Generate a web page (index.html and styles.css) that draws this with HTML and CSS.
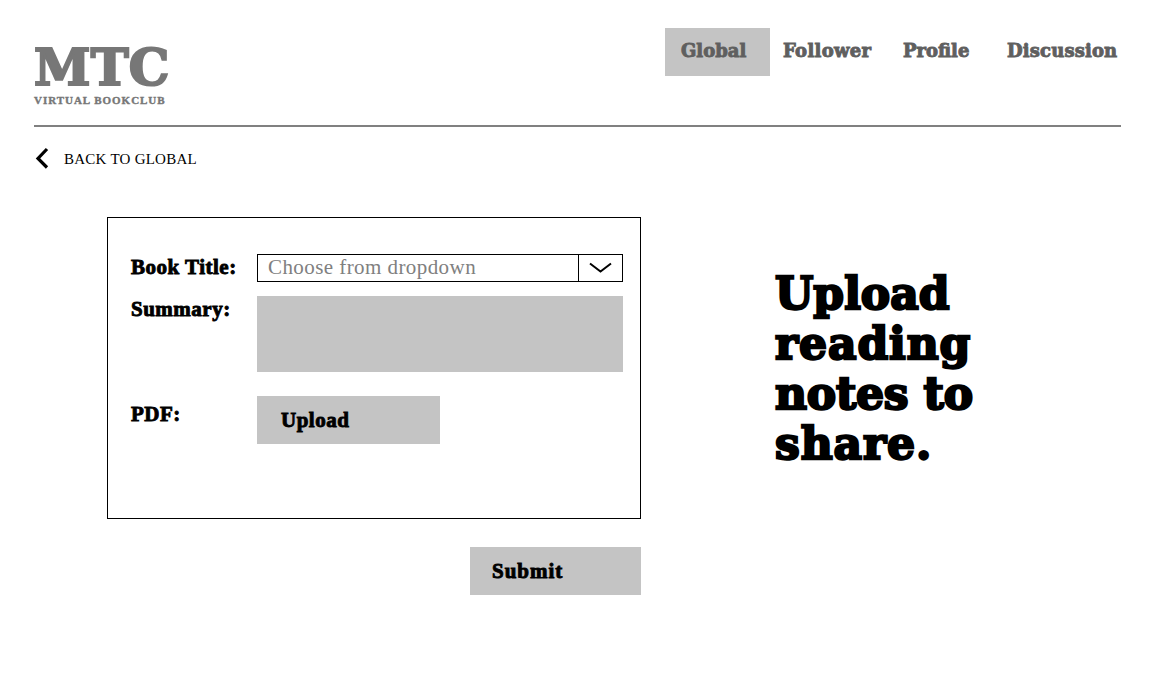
FILE: index.html
```html
<!DOCTYPE html>
<html lang="en">
<head>
<meta charset="utf-8">
<title>MTC Virtual Bookclub</title>
<link rel="stylesheet" href="styles.css">
</head>
<body>
<header class="header">
  <div class="brand">
    <div class="brand-name">MTC</div>
    <div class="brand-tag">VIRTUAL BOOKCLUB</div>
  </div>
  <nav class="nav">
    <a class="nav-item nav-global">Global</a>
    <a class="nav-item nav-follower">Follower</a>
    <a class="nav-item nav-profile">Profile</a>
    <a class="nav-item nav-discussion">Discussion</a>
  </nav>
</header>
<a class="back">
  <svg class="back-icon" width="14" height="22" viewBox="0 0 14 22"><path d="M12 2 3 11.500l9 9" fill="none" stroke="#000" stroke-width="3.200"/></svg>
  <span>BACK TO GLOBAL</span>
</a>
<main class="main">
  <form class="form">
    <div class="panel">
      <label class="label label-title">Book Title:</label>
      <div class="select">
        <span class="placeholder">Choose from dropdown</span>
        <span class="toggle"><svg width="24" height="12" viewBox="0 0 24 12"><path d="M1 1.500 11.500 9.500l10.500-8" fill="none" stroke="#000" stroke-width="2"/></svg></span>
      </div>
      <label class="label label-summary">Summary:</label>
      <div class="summary"></div>
      <label class="label label-pdf">PDF:</label>
      <div class="button upload">Upload</div>
    </div>
    <div class="button submit">Submit</div>
  </form>
  <h1 class="headline">Upload<br><span class="line-reading">reading</span><br><span class="line-notes">notes to</span><br><span class="line-share">share.</span></h1>
</main>
</body>
</html>
```
FILE: styles.css
```css
* { box-sizing: border-box; }
body {
  margin: 0;
  height: 700px;
  background: #fff;
  color: #000;
  font-family: "Liberation Serif", serif;
  overflow: hidden;
}
.header {
  display: flex;
  justify-content: space-between;
  height: 127px;
  margin: 0 31px 0 34px;
  border-bottom: 2px solid #808080;
}
.brand { padding-top: 40px; color: #777; }
.brand-name {
  font: bold 51px/54px "DejaVu Serif", serif;
  letter-spacing: 0.2px;
  height: 54px;
  -webkit-text-stroke: 2.2px #777;
}
.brand-tag {
  font-size: 11px;
  font-weight: bold;
  line-height: 12px;
  letter-spacing: 0.97px;
  -webkit-text-stroke: 0.4px #777;
}
.nav {
  display: flex;
  width: 456px;
  height: 48px;
  margin-top: 28px;
  font: bold 18px/46px "DejaVu Serif", serif;
  color: #5f5f5f;
  -webkit-text-stroke: 0.9px #5f5f5f;
  white-space: nowrap;
}
.nav-global { width: 105px; padding-left: 16px; background: #c4c4c4; }
.nav-follower { width: 120px; padding-left: 13px; letter-spacing: 0.3px; }
.nav-profile { width: 104px; padding-left: 13px; }
.nav-discussion { padding-left: 13px; letter-spacing: 0.15px; }
.back {
  display: flex;
  align-items: center;
  gap: 15px;
  height: 22px;
  margin: 20px 0 0 35px;
  font-size: 15px;
  letter-spacing: 0.25px;
}
.back span { padding-top: 2px; }
.main { display: flex; padding: 48px 0 0 107px; }
.form { display: flex; flex-direction: column; width: 534px; }
.panel {
  display: grid;
  grid-template-columns: 126px 366px;
  grid-template-rows: 28px 76px 48px;
  row-gap: 14px;
  height: 302px;
  padding: 36px 0 0 23px;
  border: 1px solid #000;
}
.label, .button {
  font-size: 21px;
  font-weight: bold;
  letter-spacing: 0.5px;
  -webkit-text-stroke: 0.9px #000;
}
.label { line-height: 26px; }
.label-pdf { padding-top: 15px; }
.select { display: flex; border: 1px solid #000; }
.placeholder {
  flex: 1;
  padding-left: 10px;
  font-size: 21px;
  line-height: 24px;
  letter-spacing: 0.43px;
  color: #808080;
}
.toggle {
  display: flex;
  align-items: center;
  justify-content: center;
  width: 44px;
  border-left: 1px solid #000;
}
.summary { background: #c4c4c4; }
.button { height: 48px; background: #c4c4c4; line-height: 48px; }
.upload { width: 183px; margin-top: 10px; padding-left: 24px; }
.submit { align-self: flex-end; width: 171px; margin-top: 28px; padding-left: 22px; letter-spacing: 1px; }
.headline {
  margin: 52px 0 0 134px;
  font: bold 44px/50px "DejaVu Serif", serif;
  -webkit-text-stroke: 2.4px #000;
}
.line-reading, .line-share { letter-spacing: 0.9px; }
.line-notes { letter-spacing: -0.2px; }
```
